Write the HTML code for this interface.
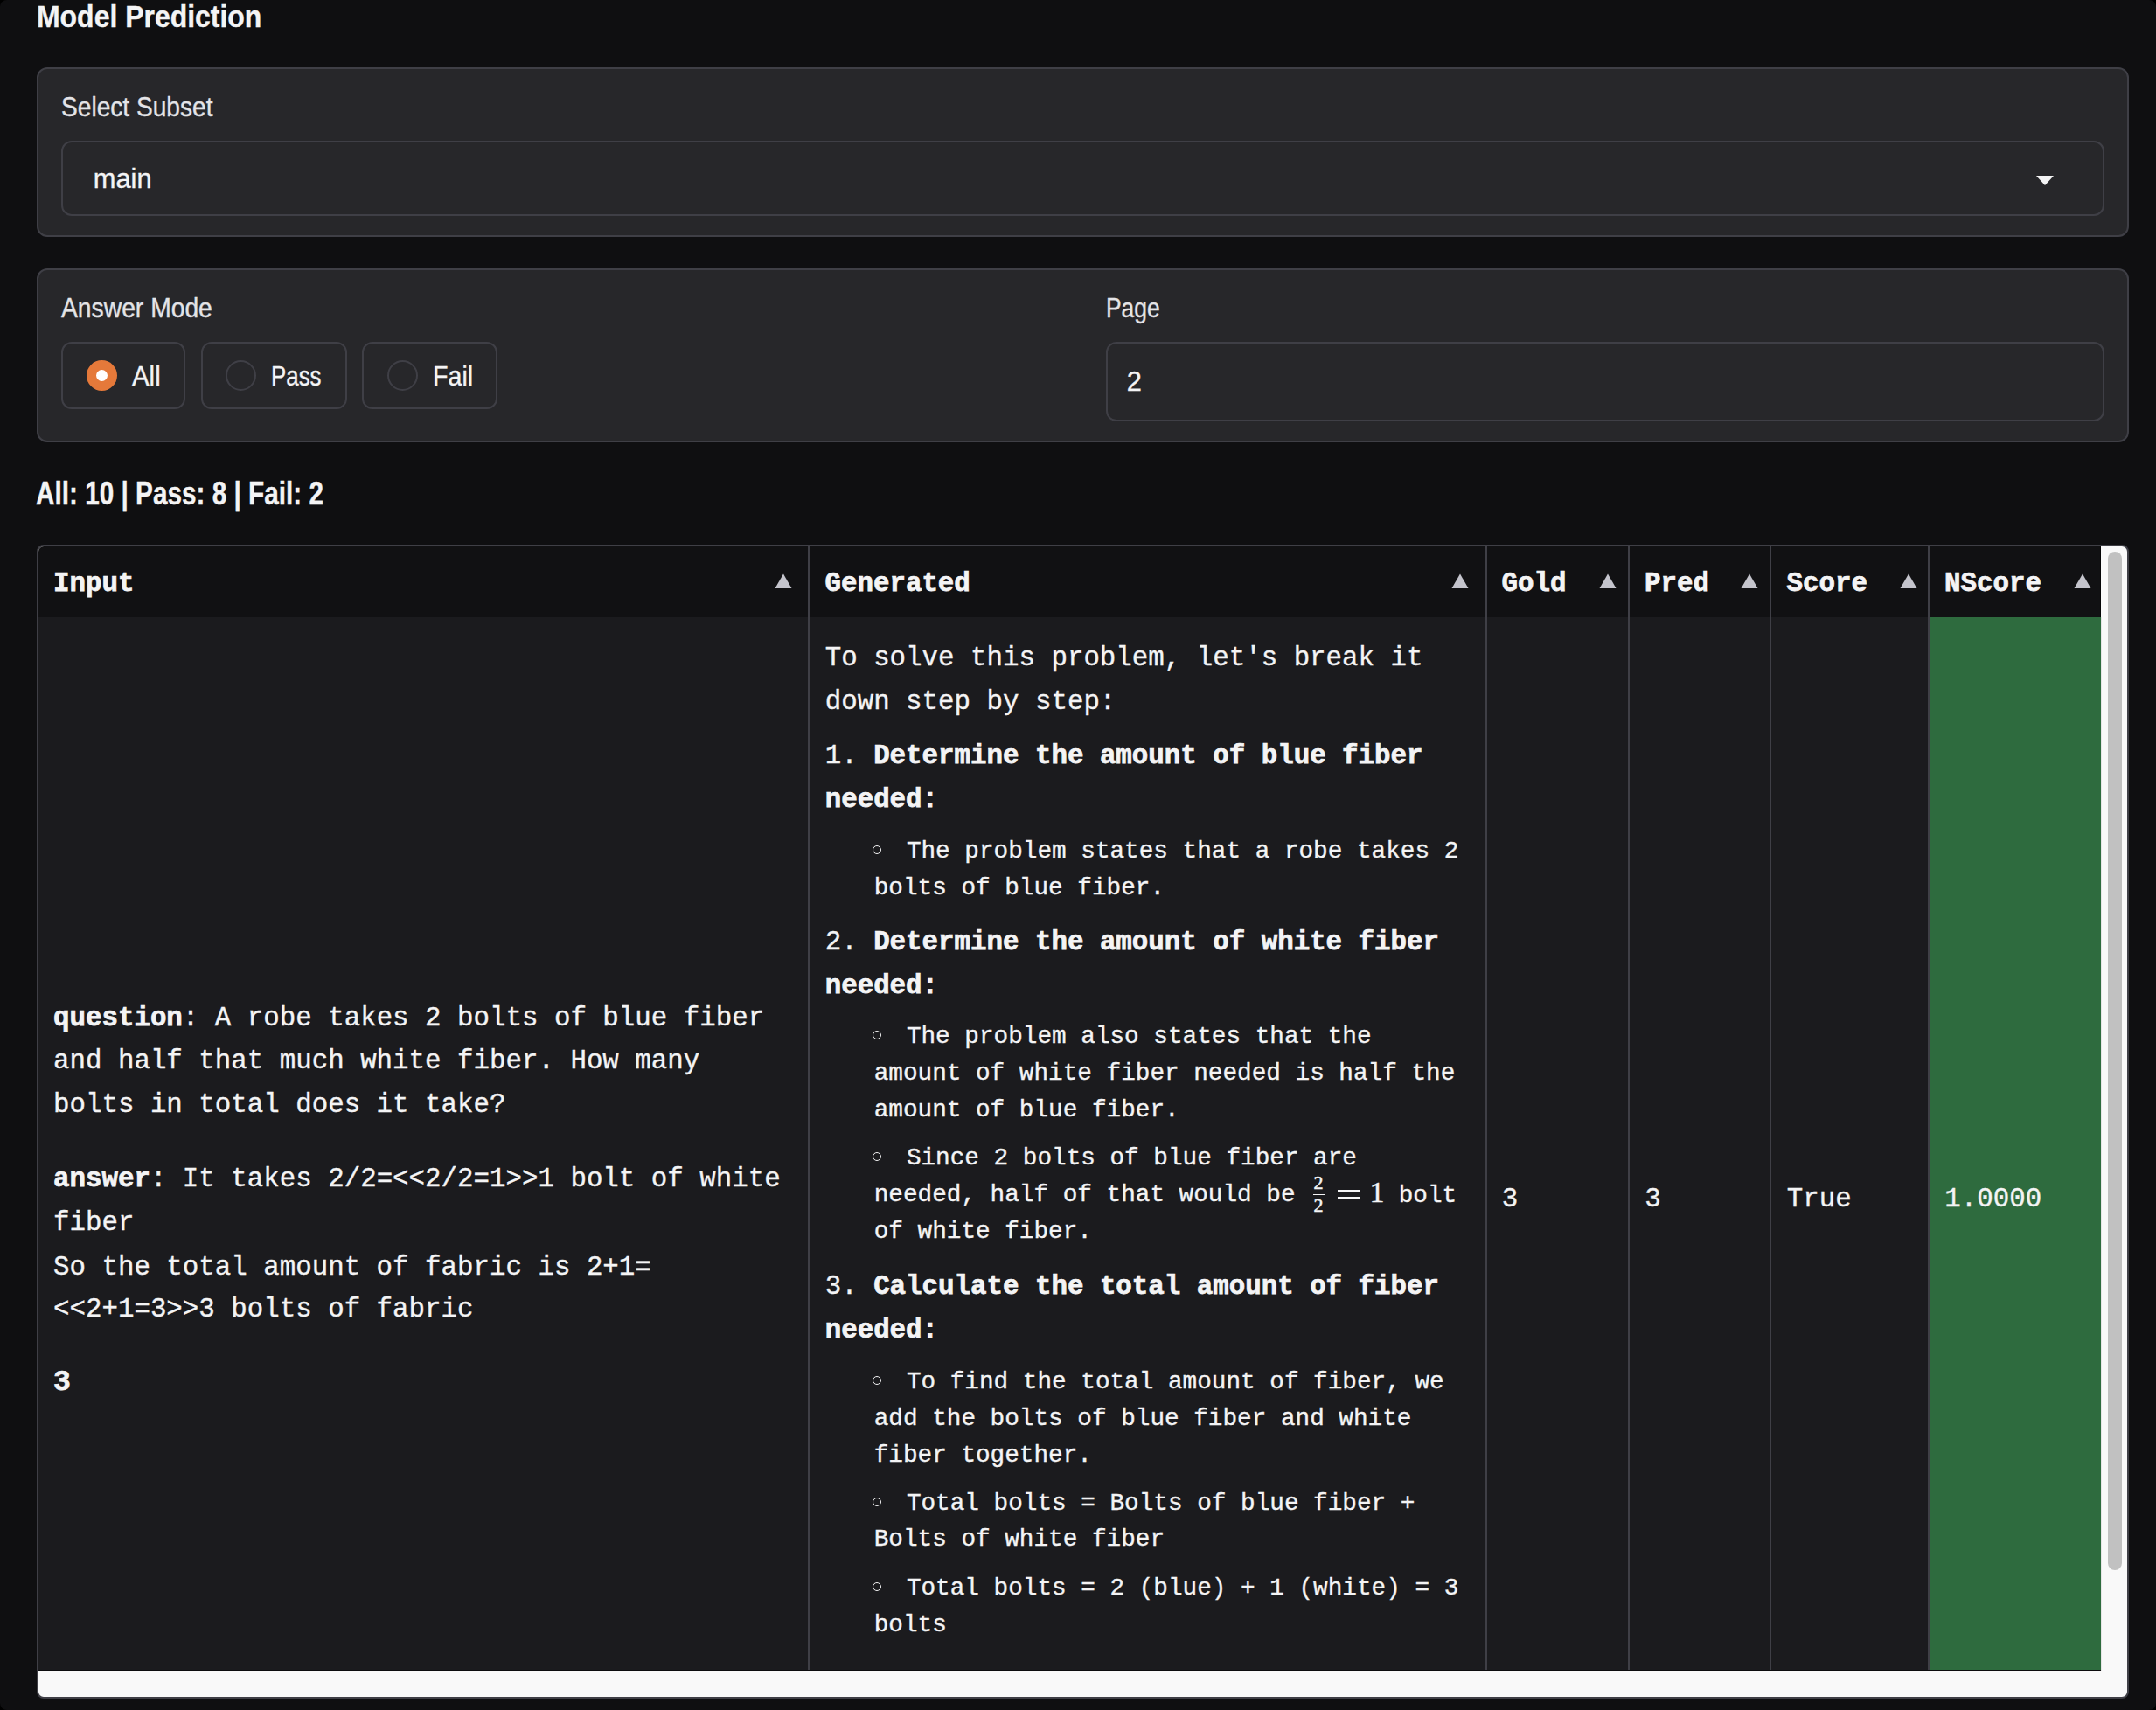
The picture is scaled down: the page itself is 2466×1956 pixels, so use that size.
<!DOCTYPE html>
<html><head><meta charset="utf-8"><title>Model Prediction</title>
<style>
html,body{margin:0;padding:0;width:2466px;height:1956px;overflow:hidden;background:#000;}
#pg{position:absolute;left:0;top:0;width:2466px;height:1956px;background:#0f0f11;border-radius:8px;overflow:hidden;}
.t{position:absolute;white-space:pre;-webkit-text-stroke:0.35px currentColor;}
.t b{font-weight:700;-webkit-text-stroke:0.75px currentColor;}
.b{position:absolute;}
</style></head><body><div id="pg">
<div class="t" style="left:42.20px;top:-1.83px;font-family:'Liberation Sans', sans-serif;font-size:35px;line-height:42.0px;font-weight:700;color:#f4f4f5;transform:scaleX(0.9126);transform-origin:0 0;">Model Prediction</div>
<div class="b" style="left:42px;top:77px;width:2393px;height:194px;background:#27272a;border:2px solid #3f3f46;border-radius:12px;box-sizing:border-box"></div>
<div class="t" style="left:70.20px;top:105.34px;font-family:'Liberation Sans', sans-serif;font-size:30.8px;line-height:36.96px;font-weight:400;color:#e4e4e7;transform:scaleX(0.913);transform-origin:0 0;">Select Subset</div>
<div class="b" style="left:70px;top:161px;width:2337px;height:86px;background:#27272a;border:2px solid #3f3f46;border-radius:12px;box-sizing:border-box"></div>
<div class="t" style="left:106.80px;top:187.04px;font-family:'Liberation Sans', sans-serif;font-size:30.8px;line-height:36.96px;font-weight:400;color:#f4f4f5;">main</div>
<svg class="b" style="left:2327px;top:199px" width="24" height="16"><polygon points="2,2 22,2 12,13" fill="#f4f4f5"/></svg>
<div class="b" style="left:42px;top:307px;width:2393px;height:199px;background:#27272a;border:2px solid #3f3f46;border-radius:12px;box-sizing:border-box"></div>
<div class="t" style="left:69.90px;top:334.84px;font-family:'Liberation Sans', sans-serif;font-size:30.8px;line-height:36.96px;font-weight:400;color:#e4e4e7;transform:scaleX(0.918);transform-origin:0 0;">Answer Mode</div>
<div class="t" style="left:1265.00px;top:335.04px;font-family:'Liberation Sans', sans-serif;font-size:30.8px;line-height:36.96px;font-weight:400;color:#e4e4e7;transform:scaleX(0.857);transform-origin:0 0;">Page</div>
<div class="b" style="left:70px;top:391px;width:142px;height:77px;background:#27272a;border:2px solid #3f3f46;border-radius:12px;box-sizing:border-box"></div>
<div class="b" style="left:99.0px;top:411.7px;width:35.0px;height:35.0px;background:#e5793a;border-radius:50%"></div>
<div class="b" style="left:110.0px;top:422.7px;width:13.0px;height:13.0px;background:#ffffff;border-radius:50%"></div>
<div class="t" style="left:151.30px;top:412.64px;font-family:'Liberation Sans', sans-serif;font-size:30.8px;line-height:36.96px;font-weight:400;color:#f4f4f5;transform:scaleX(0.955);transform-origin:0 0;">All</div>
<div class="b" style="left:230px;top:391px;width:167px;height:77px;background:#27272a;border:2px solid #3f3f46;border-radius:12px;box-sizing:border-box"></div>
<div class="b" style="left:258.0px;top:411.7px;width:35.0px;height:35.0px;border:2px solid #3f3f46;border-radius:50%;box-sizing:border-box"></div>
<div class="t" style="left:310.40px;top:412.64px;font-family:'Liberation Sans', sans-serif;font-size:30.8px;line-height:36.96px;font-weight:400;color:#f4f4f5;transform:scaleX(0.84);transform-origin:0 0;">Pass</div>
<div class="b" style="left:414px;top:391px;width:155px;height:77px;background:#27272a;border:2px solid #3f3f46;border-radius:12px;box-sizing:border-box"></div>
<div class="b" style="left:442.8px;top:411.7px;width:35.0px;height:35.0px;border:2px solid #3f3f46;border-radius:50%;box-sizing:border-box"></div>
<div class="t" style="left:495.20px;top:412.64px;font-family:'Liberation Sans', sans-serif;font-size:30.8px;line-height:36.96px;font-weight:400;color:#f4f4f5;transform:scaleX(0.93);transform-origin:0 0;">Fail</div>
<div class="b" style="left:1265px;top:391px;width:1142px;height:91px;background:#27272a;border:2px solid #3f3f46;border-radius:12px;box-sizing:border-box"></div>
<div class="t" style="left:1288.70px;top:419.04px;font-family:'Liberation Sans', sans-serif;font-size:30.8px;line-height:36.96px;font-weight:400;color:#f4f4f5;">2</div>
<div class="t" style="left:40.80px;top:543.42px;font-family:'Liberation Sans', sans-serif;font-size:36px;line-height:43.2px;font-weight:700;color:#f4f4f5;transform:scaleX(0.826);transform-origin:0 0;">All: 10 | Pass: 8 | Fail: 2</div>
<div class="b" style="left:42px;top:623px;width:2393px;height:1320px;border:2px solid #3f3f46;border-radius:8px;box-sizing:border-box;overflow:hidden;background:#f9f9f9">
<div class="b" style="left:0px;top:0px;width:2359px;height:81px;background:#111113"></div>
<div class="b" style="left:0px;top:81px;width:2359px;height:1205px;background:#1b1b1e"></div>
<div class="b" style="left:2162px;top:81px;width:197px;height:1205px;background:#2e6b3e"></div>
<div class="b" style="left:880px;top:0px;width:2px;height:1286px;background:#3f3f46"></div>
<div class="b" style="left:1655px;top:0px;width:2px;height:1286px;background:#3f3f46"></div>
<div class="b" style="left:1818px;top:0px;width:2px;height:1286px;background:#3f3f46"></div>
<div class="b" style="left:1980px;top:0px;width:2px;height:1286px;background:#3f3f46"></div>
<div class="b" style="left:2161px;top:0px;width:2px;height:1286px;background:#3f3f46"></div>
<div class="b" style="left:2358px;top:0px;width:1px;height:81px;background:#050506"></div>
<div class="b" style="left:0px;top:1285px;width:2359px;height:1px;background:#0c0c0e"></div>
<div class="b" style="left:2359px;top:81px;width:1px;height:1205px;background:#e6e6e6"></div>
<div class="b" style="left:2367px;top:6px;width:16px;height:1165px;background:#c1c1c1;border-radius:8px"></div>
</div>
<div class="t" style="left:61.00px;top:650.32px;font-family:'Liberation Mono', monospace;font-size:30.8px;line-height:36.96px;font-weight:700;color:#f4f4f5;-webkit-text-stroke:0.75px currentColor;">Input</div>
<svg class="b" style="left:886px;top:655px" width="20" height="19"><polygon points="10,1.5 19.5,18 0.5,18" fill="#c4c4cc"/></svg>
<div class="t" style="left:943.50px;top:650.32px;font-family:'Liberation Mono', monospace;font-size:30.8px;line-height:36.96px;font-weight:700;color:#f4f4f5;-webkit-text-stroke:0.75px currentColor;">Generated</div>
<svg class="b" style="left:1660px;top:655px" width="20" height="19"><polygon points="10,1.5 19.5,18 0.5,18" fill="#c4c4cc"/></svg>
<div class="t" style="left:1717.50px;top:650.32px;font-family:'Liberation Mono', monospace;font-size:30.8px;line-height:36.96px;font-weight:700;color:#f4f4f5;-webkit-text-stroke:0.75px currentColor;">Gold</div>
<svg class="b" style="left:1828.5px;top:655px" width="20" height="19"><polygon points="10,1.5 19.5,18 0.5,18" fill="#c4c4cc"/></svg>
<div class="t" style="left:1881.00px;top:650.32px;font-family:'Liberation Mono', monospace;font-size:30.8px;line-height:36.96px;font-weight:700;color:#f4f4f5;-webkit-text-stroke:0.75px currentColor;">Pred</div>
<svg class="b" style="left:1991px;top:655px" width="20" height="19"><polygon points="10,1.5 19.5,18 0.5,18" fill="#c4c4cc"/></svg>
<div class="t" style="left:2043.50px;top:650.32px;font-family:'Liberation Mono', monospace;font-size:30.8px;line-height:36.96px;font-weight:700;color:#f4f4f5;-webkit-text-stroke:0.75px currentColor;">Score</div>
<svg class="b" style="left:2173px;top:655px" width="20" height="19"><polygon points="10,1.5 19.5,18 0.5,18" fill="#c4c4cc"/></svg>
<div class="t" style="left:2224.00px;top:650.32px;font-family:'Liberation Mono', monospace;font-size:30.8px;line-height:36.96px;font-weight:700;color:#f4f4f5;-webkit-text-stroke:0.75px currentColor;">NScore</div>
<svg class="b" style="left:2372px;top:655px" width="20" height="19"><polygon points="10,1.5 19.5,18 0.5,18" fill="#c4c4cc"/></svg>
<div class="t" style="left:61.00px;top:1146.72px;font-family:'Liberation Mono', monospace;font-size:30.8px;line-height:36.96px;font-weight:400;color:#f4f4f5;"><b>question</b>: A robe takes 2 bolts of blue fiber</div>
<div class="t" style="left:61.00px;top:1195.62px;font-family:'Liberation Mono', monospace;font-size:30.8px;line-height:36.96px;font-weight:400;color:#f4f4f5;">and half that much white fiber. How many</div>
<div class="t" style="left:61.00px;top:1245.72px;font-family:'Liberation Mono', monospace;font-size:30.8px;line-height:36.96px;font-weight:400;color:#f4f4f5;">bolts in total does it take?</div>
<div class="t" style="left:61.00px;top:1331.32px;font-family:'Liberation Mono', monospace;font-size:30.8px;line-height:36.96px;font-weight:400;color:#f4f4f5;"><b>answer</b>: It takes 2/2=&lt;&lt;2/2=1&gt;&gt;1 bolt of white</div>
<div class="t" style="left:61.00px;top:1381.32px;font-family:'Liberation Mono', monospace;font-size:30.8px;line-height:36.96px;font-weight:400;color:#f4f4f5;">fiber</div>
<div class="t" style="left:61.00px;top:1431.52px;font-family:'Liberation Mono', monospace;font-size:30.8px;line-height:36.96px;font-weight:400;color:#f4f4f5;">So the total amount of fabric is 2+1=</div>
<div class="t" style="left:61.00px;top:1480.32px;font-family:'Liberation Mono', monospace;font-size:30.8px;line-height:36.96px;font-weight:400;color:#f4f4f5;">&lt;&lt;2+1=3&gt;&gt;3 bolts of fabric</div>
<div class="t" style="left:61.00px;top:1563.82px;font-family:'Liberation Mono', monospace;font-size:30.8px;line-height:36.96px;font-weight:400;color:#f4f4f5;"><b style="font-size:33px">3</b></div>
<div class="t" style="left:943.70px;top:734.82px;font-family:'Liberation Mono', monospace;font-size:30.8px;line-height:36.96px;font-weight:400;color:#f4f4f5;">To solve this problem, let's break it</div>
<div class="t" style="left:943.70px;top:785.32px;font-family:'Liberation Mono', monospace;font-size:30.8px;line-height:36.96px;font-weight:400;color:#f4f4f5;">down step by step:</div>
<div class="t" style="left:943.70px;top:847.02px;font-family:'Liberation Mono', monospace;font-size:30.8px;line-height:36.96px;font-weight:400;color:#f4f4f5;">1. <b>Determine the amount of blue fiber</b></div>
<div class="t" style="left:943.70px;top:897.02px;font-family:'Liberation Mono', monospace;font-size:30.8px;line-height:36.96px;font-weight:400;color:#f4f4f5;"><b>needed:</b></div>
<div class="t" style="left:943.70px;top:1059.72px;font-family:'Liberation Mono', monospace;font-size:30.8px;line-height:36.96px;font-weight:400;color:#f4f4f5;">2. <b>Determine the amount of white fiber</b></div>
<div class="t" style="left:943.70px;top:1109.82px;font-family:'Liberation Mono', monospace;font-size:30.8px;line-height:36.96px;font-weight:400;color:#f4f4f5;"><b>needed:</b></div>
<div class="t" style="left:943.70px;top:1454.12px;font-family:'Liberation Mono', monospace;font-size:30.8px;line-height:36.96px;font-weight:400;color:#f4f4f5;">3. <b>Calculate the total amount of fiber</b></div>
<div class="t" style="left:943.70px;top:1504.22px;font-family:'Liberation Mono', monospace;font-size:30.8px;line-height:36.96px;font-weight:400;color:#f4f4f5;"><b>needed:</b></div>
<div class="b" style="left:998.0px;top:966.9px;width:10px;height:10px;border:1.6px solid #f4f4f5;border-radius:50%;box-sizing:border-box"></div>
<div class="t" style="left:1036.90px;top:956.91px;font-family:'Liberation Mono', monospace;font-size:27.7px;line-height:33.24px;font-weight:400;color:#f4f4f5;">The problem states that a robe takes 2</div>
<div class="t" style="left:999.70px;top:998.51px;font-family:'Liberation Mono', monospace;font-size:27.7px;line-height:33.24px;font-weight:400;color:#f4f4f5;">bolts of blue fiber.</div>
<div class="b" style="left:998.0px;top:1179.3px;width:10px;height:10px;border:1.6px solid #f4f4f5;border-radius:50%;box-sizing:border-box"></div>
<div class="t" style="left:1036.90px;top:1169.31px;font-family:'Liberation Mono', monospace;font-size:27.7px;line-height:33.24px;font-weight:400;color:#f4f4f5;">The problem also states that the</div>
<div class="t" style="left:999.70px;top:1210.91px;font-family:'Liberation Mono', monospace;font-size:27.7px;line-height:33.24px;font-weight:400;color:#f4f4f5;">amount of white fiber needed is half the</div>
<div class="t" style="left:999.70px;top:1252.51px;font-family:'Liberation Mono', monospace;font-size:27.7px;line-height:33.24px;font-weight:400;color:#f4f4f5;">amount of blue fiber.</div>
<div class="b" style="left:998.0px;top:1318.4px;width:10px;height:10px;border:1.6px solid #f4f4f5;border-radius:50%;box-sizing:border-box"></div>
<div class="t" style="left:1036.90px;top:1308.41px;font-family:'Liberation Mono', monospace;font-size:27.7px;line-height:33.24px;font-weight:400;color:#f4f4f5;">Since 2 bolts of blue fiber are</div>
<div class="t" style="left:999.70px;top:1350.01px;font-family:'Liberation Mono', monospace;font-size:27.7px;line-height:33.24px;font-weight:400;color:#f4f4f5;">needed, half of that would be</div>
<div class="t" style="left:999.70px;top:1391.61px;font-family:'Liberation Mono', monospace;font-size:27.7px;line-height:33.24px;font-weight:400;color:#f4f4f5;">of white fiber.</div>
<div class="b" style="left:998.0px;top:1574.4px;width:10px;height:10px;border:1.6px solid #f4f4f5;border-radius:50%;box-sizing:border-box"></div>
<div class="t" style="left:1036.90px;top:1564.41px;font-family:'Liberation Mono', monospace;font-size:27.7px;line-height:33.24px;font-weight:400;color:#f4f4f5;">To find the total amount of fiber, we</div>
<div class="t" style="left:999.70px;top:1606.01px;font-family:'Liberation Mono', monospace;font-size:27.7px;line-height:33.24px;font-weight:400;color:#f4f4f5;">add the bolts of blue fiber and white</div>
<div class="t" style="left:999.70px;top:1647.61px;font-family:'Liberation Mono', monospace;font-size:27.7px;line-height:33.24px;font-weight:400;color:#f4f4f5;">fiber together.</div>
<div class="b" style="left:998.0px;top:1712.8px;width:10px;height:10px;border:1.6px solid #f4f4f5;border-radius:50%;box-sizing:border-box"></div>
<div class="t" style="left:1036.90px;top:1702.81px;font-family:'Liberation Mono', monospace;font-size:27.7px;line-height:33.24px;font-weight:400;color:#f4f4f5;">Total bolts = Bolts of blue fiber +</div>
<div class="t" style="left:999.70px;top:1744.41px;font-family:'Liberation Mono', monospace;font-size:27.7px;line-height:33.24px;font-weight:400;color:#f4f4f5;">Bolts of white fiber</div>
<div class="b" style="left:998.0px;top:1810px;width:10px;height:10px;border:1.6px solid #f4f4f5;border-radius:50%;box-sizing:border-box"></div>
<div class="t" style="left:1036.90px;top:1800.01px;font-family:'Liberation Mono', monospace;font-size:27.7px;line-height:33.24px;font-weight:400;color:#f4f4f5;">Total bolts = 2 (blue) + 1 (white) = 3</div>
<div class="t" style="left:999.70px;top:1841.61px;font-family:'Liberation Mono', monospace;font-size:27.7px;line-height:33.24px;font-weight:400;color:#f4f4f5;">bolts</div>
<div class="t" style="left:1502.50px;top:1339.98px;font-family:'Liberation Serif', serif;font-size:22px;line-height:26.4px;font-weight:400;color:#f4f4f5;-webkit-text-stroke:0.5px #f4f4f5;">2</div>
<div class="b" style="left:1501.8px;top:1365.6px;width:13.299999999999955px;height:1.800000000000182px;background:#f4f4f5"></div>
<div class="t" style="left:1502.50px;top:1366.38px;font-family:'Liberation Serif', serif;font-size:22px;line-height:26.4px;font-weight:400;color:#f4f4f5;-webkit-text-stroke:0.5px #f4f4f5;">2</div>
<div class="b" style="left:1530.2px;top:1361.2px;width:24.399999999999864px;height:2.2000000000000455px;background:#f4f4f5"></div>
<div class="b" style="left:1530.2px;top:1369px;width:24.399999999999864px;height:2.2000000000000455px;background:#f4f4f5"></div>
<div class="t" style="left:1566.50px;top:1343.53px;font-family:'Liberation Serif', serif;font-size:34px;line-height:40.8px;font-weight:400;color:#f4f4f5;-webkit-text-stroke:0.4px #f4f4f5;">1</div>
<div class="t" style="left:1599.70px;top:1351.41px;font-family:'Liberation Mono', monospace;font-size:27.7px;line-height:33.24px;font-weight:400;color:#f4f4f5;">bolt</div>
<div class="t" style="left:1717.80px;top:1353.72px;font-family:'Liberation Mono', monospace;font-size:30.8px;line-height:36.96px;font-weight:400;color:#f4f4f5;">3</div>
<div class="t" style="left:1881.20px;top:1353.72px;font-family:'Liberation Mono', monospace;font-size:30.8px;line-height:36.96px;font-weight:400;color:#f4f4f5;">3</div>
<div class="t" style="left:2043.80px;top:1353.72px;font-family:'Liberation Mono', monospace;font-size:30.8px;line-height:36.96px;font-weight:400;color:#f4f4f5;">True</div>
<div class="t" style="left:2224.30px;top:1353.72px;font-family:'Liberation Mono', monospace;font-size:30.8px;line-height:36.96px;font-weight:400;color:#f4f4f5;">1.0000</div>
</div></body></html>
